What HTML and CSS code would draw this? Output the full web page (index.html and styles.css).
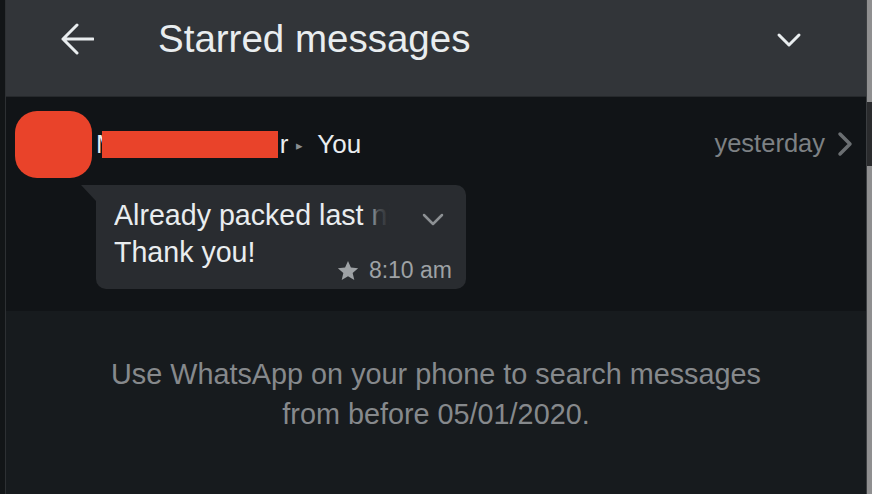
FILE: index.html
```html
<!DOCTYPE html>
<html lang="en">
<head>
    <meta charset="UTF-8">
    <meta name="viewport" content="width=device-width, initial-scale=1.0">
    <title>Starred messages</title>
    <link rel="stylesheet" href="styles.css">
</head>
<body>
    <div class="window">
        <div class="edge-left"></div>

        <div class="panel">
            <!-- Top bar -->
            <header class="topbar">
                <svg class="back-icon" width="34" height="32" viewBox="0 0 34 32">
                    <path d="M33 16H3M17 2L3 16l14 14" fill="none" stroke="#e9edef" stroke-width="3" stroke-linecap="round" stroke-linejoin="round"/>
                </svg>
                <h1 class="title">Starred messages</h1>
                <svg class="menu-icon" width="26" height="16" viewBox="0 0 26 16">
                    <path d="M3 3l10 10L23 3" fill="none" stroke="#e9edef" stroke-width="3" stroke-linecap="round" stroke-linejoin="round"/>
                </svg>
            </header>

            <!-- Starred message -->
            <section class="starred">
                <div class="meta-row">
                    <div class="avatar"></div>
                    <div class="names">
                        <span class="name-first">M</span><span class="redact"></span><span>r</span>
                        <span class="arrow">&#9656;</span>
                        <span>You</span>
                    </div>
                    <span class="date">yesterday</span>
                    <svg class="open-icon" width="18" height="26" viewBox="0 0 18 26">
                        <path d="M3 3l10 10L3 23" fill="none" stroke="#6b6f72" stroke-width="3.5" stroke-linecap="round" stroke-linejoin="round"/>
                    </svg>
                </div>

                <div class="bubble">
                    <div class="msg-text">Already packed last night.<br>Thank you!</div>
                    <div class="msg-meta">
                        <svg width="22" height="21" viewBox="0 0 24 23">
                            <path d="M12 1l3.2 7.3 7.9.7-6 5.2 1.8 7.8L12 17.9l-6.9 4.1 1.8-7.8-6-5.2 7.9-.7z" fill="#9ea2a5"/>
                        </svg>
                        <span>8:10 am</span>
                    </div>
                    <div class="msg-fade">
                        <svg width="22" height="14" viewBox="0 0 22 14">
                            <path d="M2 2l9 9 9-9" fill="none" stroke="#8d9194" stroke-width="2.5" stroke-linecap="round" stroke-linejoin="round"/>
                        </svg>
                    </div>
                </div>
            </section>

            <p class="notice">Use WhatsApp on your phone to search messages<br>from before 05/01/2020.</p>
        </div>

        <div class="edge-right">
            <div class="scroll-thumb"></div>
        </div>
    </div>
</body>
</html>
```

FILE: styles.css
```css
body {
    margin: 0;
    padding: 0;
    font-family: 'Liberation Sans', Arial, sans-serif;
    background-color: #101315;
    color: #e9edef;
}

.window {
    display: flex;
    width: 872px;
    height: 494px;
    overflow: hidden;
}

.edge-left {
    width: 5px;
    background-color: #121517;
    border-right: 1px solid #2d3033;
}

.panel {
    width: 860px;
    display: flex;
    flex-direction: column;
    background-color: #171b1e;
}

.edge-right {
    width: 5px;
    border-left: 1px solid #3b3e41;
    background-color: #8f8f90;
}

.scroll-thumb {
    margin-top: 102px;
    height: 64px;
    background-color: #2a2b2d;
}

/* Top bar */
.topbar {
    height: 97px;
    display: flex;
    align-items: center;
    background-color: #323539;
    padding-left: 54px;
    padding-right: 64px;
    box-sizing: border-box;
    border-bottom: 1px solid #26292c;
}

.back-icon {
    margin-top: -18px;
}

.title {
    margin: -18px 0 0 64px;
    font-size: 38.5px;
    font-weight: normal;
    color: #e9edef;
    flex: 1;
}

.menu-icon {
    margin-top: -16px;
}

/* Starred list */
.starred {
    background-color: #111417;
    padding: 14px 0 22px 9px;
}

.meta-row {
    display: flex;
    align-items: center;
    height: 67px;
}

.avatar {
    width: 77px;
    height: 67px;
    border-radius: 22px;
    background-color: #e9432a;
}

.names {
    flex: 1;
    display: flex;
    align-items: center;
    margin-left: 4px;
    font-size: 26px;
    color: #e9edef;
}

/* redaction bar is drawn over most of the name */
.name-first {
    margin-right: -16px;
}

.redact {
    display: inline-block;
    width: 176px;
    height: 27px;
    margin-right: 2px;
    background-color: #e9432a;
}

.arrow {
    font-size: 13px;
    color: #8a8e91;
    margin: 2px 14px 0 8px;
}

.date {
    font-size: 25.5px;
    color: #7d8184;
    margin-top: -2px;
}

.open-icon {
    margin: -2px 11px 0 12px;
}

.bubble {
    position: relative;
    display: grid;
    width: 370px;
    height: 104px;
    box-sizing: border-box;
    margin: 7px 0 0 81px;
    padding: 12px 14px 7px 18px;
    background-color: #292c30;
    border-radius: 0 10px 10px 10px;
}

.bubble::before {
    content: "";
    position: absolute;
    left: -15px;
    top: 0;
    width: 0;
    height: 0;
    border-top: 16px solid #292c30;
    border-left: 15px solid transparent;
}

.msg-text,
.msg-meta {
    grid-area: 1 / 1;
}

.msg-text {
    font-size: 28.6px;
    line-height: 37px;
    white-space: nowrap;
    overflow: hidden;
    color: #e9edef;
}

.msg-meta {
    align-self: end;
    justify-self: end;
    display: flex;
    align-items: center;
    gap: 10px;
    font-size: 23px;
    line-height: 24px;
    color: #9ea2a5;
}

.msg-fade {
    position: absolute;
    top: 18px;
    right: 0;
    width: 100px;
    height: 34px;
    display: flex;
    justify-content: flex-end;
    align-items: center;
    padding-right: 22px;
    box-sizing: border-box;
    background: linear-gradient(to right, rgba(41, 44, 48, 0) 0%, rgba(41, 44, 48, 0.8) 12%, #292c30 24%);
}

/* Footer notice */
.notice {
    margin: 43px 0 0;
    text-align: center;
    font-size: 28.8px;
    line-height: 40px;
    color: #86898c;
}
```
